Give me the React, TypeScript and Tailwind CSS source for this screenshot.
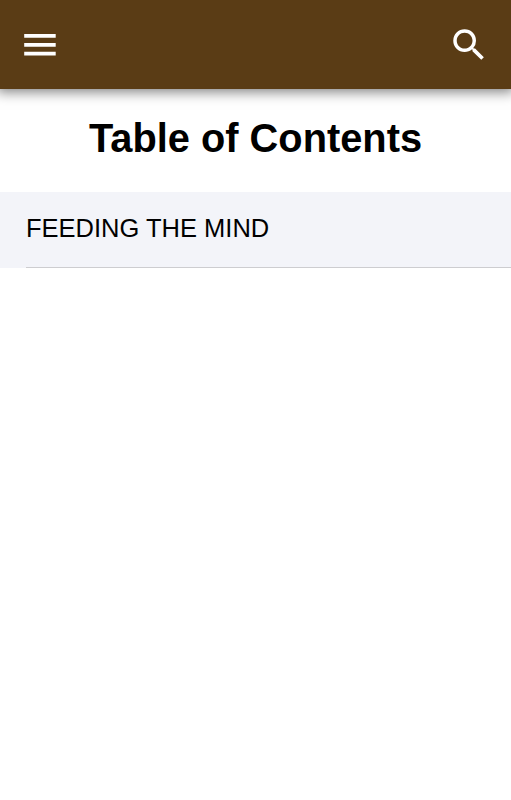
import React from 'react';
import { MdSearch } from 'react-icons/md';

interface Chapter {
  id: number;
  title: string;
}

const chapters: Chapter[] = [{ id: 1, title: 'FEEDING THE MIND' }];

const MenuIcon = () => (
  <svg width="32" height="22" viewBox="0 0 32 22" fill="currentColor">
    <path d="M.2.1h31.5v3.7H.2zM.2 9h31.5v3.7H.2zM.2 17.7h31.5v3.7H.2z" />
  </svg>
);

const App: React.FC = () => {
  return (
    <div className="min-h-screen overflow-x-hidden bg-white text-black font-['Liberation_Sans',Arial,sans-serif]">
      <header className="relative flex h-[89px] items-center justify-between bg-[#5a3c15] pl-6 pr-[21px] text-white shadow-[0_0_12px_3px_rgba(0,0,0,0.5)]">
        <button aria-label="Open menu">
          <MenuIcon />
        </button>
        <button aria-label="Search">
          <MdSearch size={42} />
        </button>
      </header>

      <main>
        <h1 className="flex h-[103px] items-center justify-center pb-[3px] text-[39.8px] font-bold leading-none">
          Table of Contents
        </h1>
        <ul>
          {chapters.map((chapter) => (
            <li key={chapter.id} className="bg-[#f3f4f9] pl-[26px]">
              <a href="#" className="flex h-[76px] items-center border-b border-[#cdcdd0] pb-[2px] text-[25.5px] leading-none">
                {chapter.title}
              </a>
            </li>
          ))}
        </ul>
      </main>
    </div>
  );
};

export default App;
